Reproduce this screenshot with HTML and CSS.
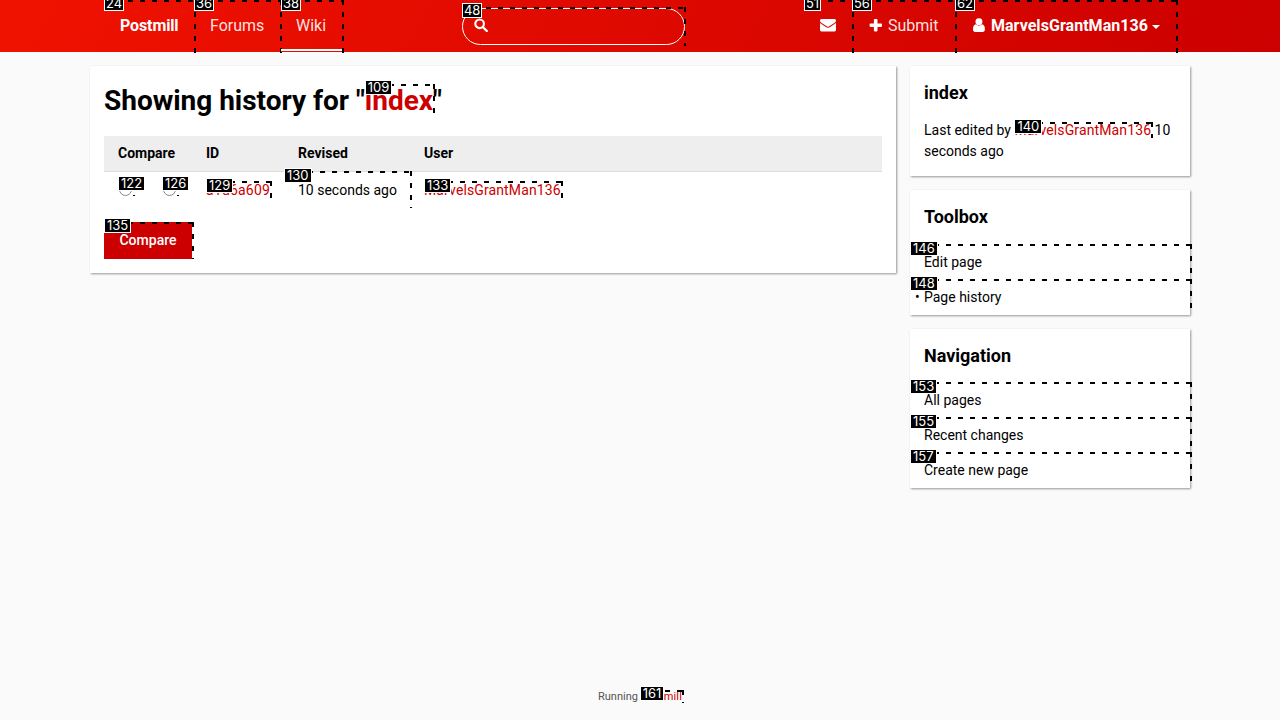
FILE: index.html
```html
<!DOCTYPE html>
<html lang="en">
<head>
<meta charset="utf-8">
<title>Showing history for "index"</title>
<link rel="stylesheet" href="styles.css">
</head>
<body>
<header class="topbar">
  <nav class="topbar-inner">
    <a class="nav-link brand">Postmill<span class="mark mark-nav"><b>24</b></span></a>
    <a class="nav-link forums">Forums<span class="mark mark-nav"><b>36</b></span></a>
    <a class="nav-link active">Wiki<span class="mark mark-nav mark-last"><b>38</b></span></a>
    <div class="search">
      <svg width="14" height="14" viewBox="0 0 14 14"><circle cx="5.6" cy="5.8" r="4.3" fill="none" stroke="currentColor" stroke-width="2.1"/><path d="M8.8 9l4 4" stroke="currentColor" stroke-width="2.4" stroke-linecap="round"/></svg>
      <span class="mark mark-search"><b>48</b></span>
    </div>
    <div class="user-nav">
      <a class="nav-link"><svg width="16" height="16" viewBox="0 0 16 16" fill="currentColor"><path d="M0 3.5Q0 2 1.5 2h13Q16 2 16 3.500Q16 4.700 14.700 5.700L9.700 9.100Q8 10.200 6.300 9.100L1.300 5.700Q0 4.700 0 3.500zM0 6.100l5.800 4Q8 11.500 10.200 10.100L16 6.100v7q0 1.400-1.400 1.400H1.400Q0 14.500 0 13.100z"/></svg><span class="mark mark-nav"><b>51</b></span></a>
      <a class="nav-link submit"><svg width="14" height="14" viewBox="0 0 14 14" fill="currentColor"><path d="M5.700 1h2q.8 0 .8.800v3.700h3.700q.8 0 .8.800v1.800q0 .800-.800.800H8.500v3.700q0 .800-.800.800h-2q-.800 0-.800-.800V8.900H1.400q-.800 0-.800-.800V6.300q0-.800.800-.800h3.500V1.800q0-.800.800-.800z"/></svg>Submit<span class="mark mark-nav"><b>56</b></span></a>
      <a class="nav-link account"><svg width="12" height="16" viewBox="0 0 12 16" fill="currentColor"><circle cx="6" cy="4.800" r="3.500"/><path d="M3 7.300Q6 10 9 7.300q3 .500 3 5Q12 15 9.600 15H2.400Q0 15 0 12.300q0-4.500 3-5z"/></svg>MarvelsGrantMan136<i class="caret"></i><span class="mark mark-nav"><b>62</b></span></a>
    </div>
  </nav>
</header>
<div class="page">
  <main class="card content">
    <h1>Showing history for "<a class="marked">index<span class="mark mark-title"><b>109</b></span></a>"</h1>
    <table>
      <thead><tr><th class="col-compare">Compare</th><th class="col-id">ID</th><th class="col-revised">Revised</th><th>User</th></tr></thead>
      <tbody><tr>
        <td><div class="radios"><span class="radio"><span class="mark mark-radio"><b>122</b></span></span><span class="radio"><span class="mark mark-radio"><b>126</b></span></span></div></td>
        <td><a class="marked hash">a1d6a609<span class="mark mark-text"><b>129</b></span></a></td>
        <td class="marked">10 seconds ago<span class="mark mark-cell"><b>130</b></span></td>
        <td><a class="marked username">MarvelsGrantMan136<span class="mark mark-text"><b>133</b></span></a></td>
      </tr></tbody>
    </table>
    <button class="button">Compare<span class="mark mark-button"><b>135</b></span></button>
  </main>
  <aside class="sidebar">
    <section class="card">
      <h2>index</h2>
      <p>Last edited by <a class="marked username">MarvelsGrantMan136<span class="mark mark-inline"><b>140</b></span></a> 10 seconds ago</p>
    </section>
    <section class="card menu toolbox">
      <h2>Toolbox</h2>
      <ul>
        <li>Edit page<span class="mark mark-menu"><b>146</b></span></li>
        <li class="current">Page history<span class="mark mark-menu"><b>148</b></span></li>
      </ul>
    </section>
    <section class="card menu">
      <h2>Navigation</h2>
      <ul>
        <li>All pages<span class="mark mark-menu"><b>153</b></span></li>
        <li>Recent changes<span class="mark mark-menu"><b>155</b></span></li>
        <li>Create new page<span class="mark mark-menu"><b>157</b></span></li>
      </ul>
    </section>
  </aside>
</div>
<footer>Running <a class="marked">Postmill<span class="mark mark-footer"><b>161</b></span></a></footer>
</body>
</html>
```
FILE: styles.css
```css
* { box-sizing: border-box; }
body {
  margin: 0;
  height: 720px;
  overflow: hidden;
  display: flex;
  flex-direction: column;
  background: #fafafa;
  color: #000;
  font: 14px/21px Roboto, sans-serif;
}
a { color: #c00; }
.marked { position: relative; }

.topbar {
  height: 52px;
  flex: none;
  background: linear-gradient(120deg, #f01200, #c00);
  color: #fff;
  font-size: 16px;
}
.topbar-inner { width: 1072px; height: 52px; margin: 0 auto; display: flex; align-items: center; }
.nav-link {
  position: relative;
  display: flex;
  align-items: center;
  height: 52px;
  padding: 0 16px 2px;
  white-space: nowrap;
  color: rgba(255, 255, 255, .9);
}
.brand, .account { font-weight: 700; color: #fff; }
.brand { width: 90px; letter-spacing: -.12px; }
.forums { width: 86px; }
.active { width: 62px; margin-left: 1px; padding-left: 15px; box-shadow: inset 0 -1px #d81000, inset 0 -3px #fff; }
.search {
  position: relative;
  width: 223px;
  height: 37px;
  margin: 1px 0 0 119px;
  padding: 9px 12px 9px 11px;
  border: 1px solid #fff;
  border-radius: 19px;
}
.search svg { display: block; }
.user-nav { display: flex; margin-left: auto; }
.nav-link svg { display: block; color: #fff; }
.submit { width: 103px; }
.submit svg { margin: 0 5px 0 1px; }
.account { width: 221px; letter-spacing: .05px; }
.account svg { margin: 0 6px 0 2px; }
.caret { margin: 3px 0 0 4px; border: 4px solid transparent; border-top-color: #fff; border-bottom: 0; }

.page { display: flex; gap: 14px; align-items: flex-start; width: 1100px; margin: 14px auto 0; }
.card { background: #fff; padding: 14px; box-shadow: 1px 1px 2px rgba(0, 0, 0, .4); }
.content { width: 806px; height: 207px; padding-top: 15px; }
h1 { margin: 0 0 15px; font-size: 28px; line-height: 40px; font-weight: 700; letter-spacing: -.02px; }
table { width: 100%; border-collapse: separate; border-spacing: 0; table-layout: fixed; }
th, td { padding: 7px 14px; text-align: left; white-space: nowrap; }
th { background: #eee; border-bottom: 1px solid #ddd; }
.col-compare { width: 88px; }
.col-id { width: 92px; }
.col-revised { width: 126px; }
td { height: 36px; }
.hash { letter-spacing: .2px; }
.username { letter-spacing: .12px; }
.radios { display: flex; gap: 31px; padding-left: 1px; }
.radio { position: relative; width: 13px; height: 13px; margin-top: -2px; border: 1px solid #888; border-radius: 50%; }
.button {
  position: relative;
  display: block;
  width: 88px;
  height: 37px;
  margin-top: 14px;
  padding: 0;
  border: 0;
  background: #c00;
  color: #fff;
  font: 500 14px/37px Roboto, sans-serif;
}

.sidebar { width: 280px; display: flex; flex-direction: column; gap: 14px; }
h2 { margin: 0 0 15px; font-size: 18px; line-height: 25px; font-weight: 700; }
p { margin: 0; }
.menu { padding-bottom: 0; }
.toolbox h2 { margin-bottom: 16px; }
ul { list-style: none; margin: 0 -14px; padding: 0; }
li { position: relative; height: 35px; padding: 7px 14px; }
.current::before { content: "•"; position: absolute; left: 5px; font-size: 14px; }

footer { margin-top: auto; padding-bottom: 13px; text-align: center; color: #555; font-size: 11px; line-height: 20px; }
footer a { letter-spacing: .15px; }

/* Numbered dashed markers laid over interactive elements */
.mark {
  position: absolute;
  inset: 0 -2px 0 0;
  background:
    repeating-linear-gradient(90deg, #000 0 5px, transparent 5px 12px) 0 0 / 100% 2px no-repeat,
    repeating-linear-gradient(180deg, #000 0 5px, transparent 5px 12px) 100% 0 / 2px 100% no-repeat;
}
.mark b {
  position: absolute;
  left: 0;
  top: -4px;
  height: 15px;
  padding: 0 2px;
  background: #000;
  border: 1px solid #fff;
  color: #fff;
  font: 400 13px/13px Inter, sans-serif;
  letter-spacing: 0;
}
.mark-nav { bottom: -1px; }
.mark-last { right: -1px; }
.mark-nav b, .mark-search b { padding: 0 1px; letter-spacing: -.1px; }
.mark-search { inset: -2px -2px -2px -1px; }
.mark-text { inset: -1px -2px 0 0; }
.mark-text b { top: -3px; }
.mark-inline b { top: -3px; }
.mark-cell { inset: -1px -2px 0 0; }
.mark-cell b { top: -3px; }
.mark-radio { inset: -1px -4px -1px -2px; }
.mark-radio b { top: -7px; }
.mark-menu { inset: -1px -2px 0 0; }
.mark-menu b { top: -3px; }
.mark-footer { right: -2px; }
.mark-footer b { left: -1px; }
```
